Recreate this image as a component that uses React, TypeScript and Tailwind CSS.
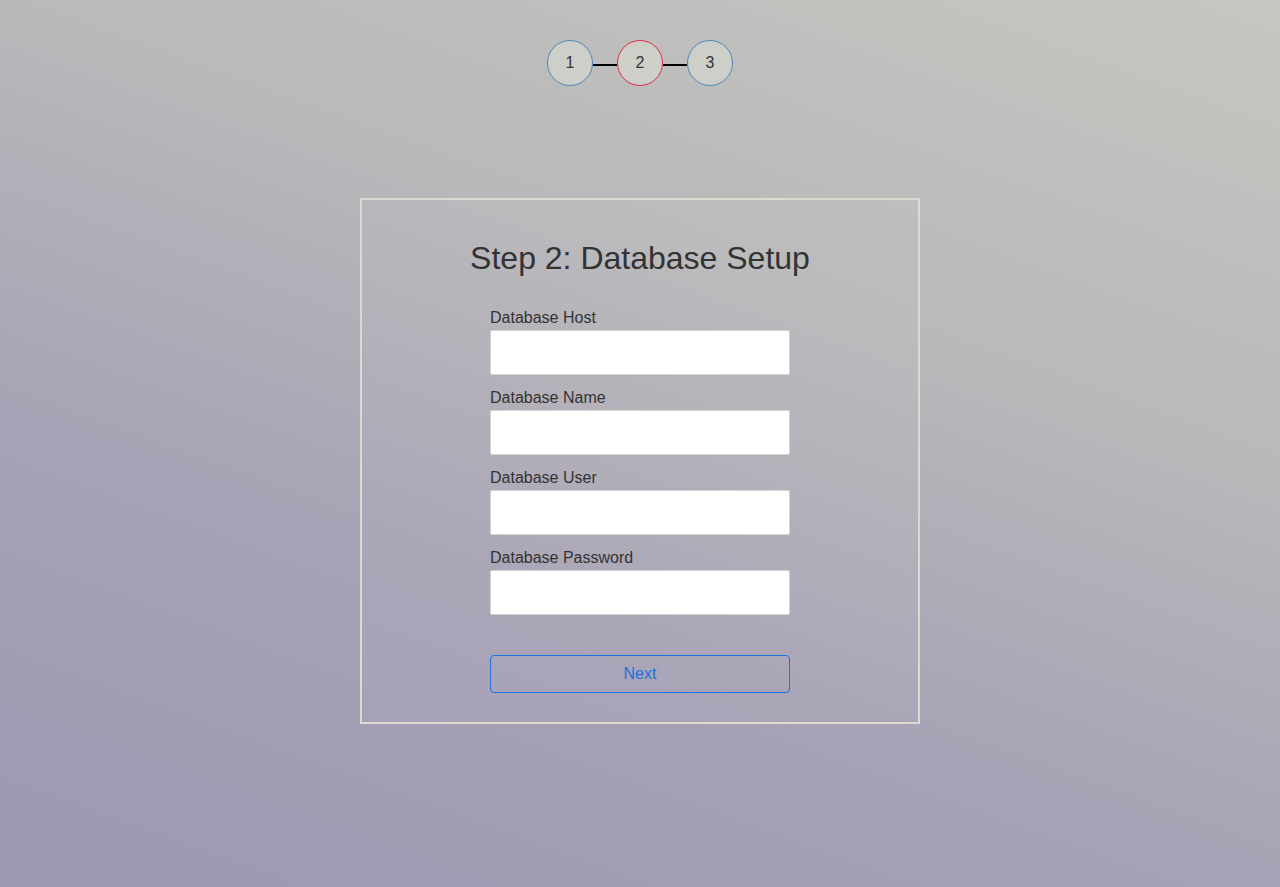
import { useState } from 'react';

const steps = [1, 2, 3];
const fields = [
  { id: 'host', label: 'Database Host', type: 'text' },
  { id: 'name', label: 'Database Name', type: 'text' },
  { id: 'user', label: 'Database User', type: 'text' },
  { id: 'password', label: 'Database Password', type: 'password' },
];

export default function App() {
  const [current] = useState(2);
  const [values, setValues] = useState<Record<string, string>>({});

  return (
    <div
      className="min-h-screen w-full bg-[linear-gradient(200deg,#c6c6c1_0%,#b9b8ba_35%,#a7a2b5_65%,#9d97b1_100%)] pt-[40px] text-[#333] flex flex-col items-center"
      style={{ fontFamily: '"Liberation Sans", Arial, sans-serif' }}
    >
      {/* Step indicator */}
      <div className="flex items-center">
        {steps.map((step, i) => (
          <div key={step} className="flex items-center">
            {i > 0 && <div className="mt-[3px] h-[2px] w-[24px] bg-black" />}
            <div
              className={`flex h-[46px] w-[46px] items-center justify-center rounded-full border bg-[#cfcfca] text-base ${
                step === current ? 'border-[#dc2a4b]' : 'border-[#4f85bb]'
              }`}
            >
              {step}
            </div>
          </div>
        ))}
      </div>

      {/* Card */}
      <div className="mt-[112px] w-[560px] h-[526px] border-2 border-[#dbd9d0] bg-white/[0.04] pt-[39px] flex flex-col items-center">
        <h2 className="text-[32px] leading-[38px] font-normal text-[#333]">Step 2: Database Setup</h2>

        <form className="mt-[31px] w-[300px] flex flex-col gap-[13px]" onSubmit={(e) => e.preventDefault()}>
          {fields.map((field) => (
            <div key={field.id}>
              <label htmlFor={field.id} className="block pt-[1px] text-base leading-[18px] mb-[3px] text-[#333]">
                {field.label}
              </label>
              <input
                id={field.id}
                type={field.type}
                value={values[field.id] || ''}
                onChange={(e) => setValues({ ...values, [field.id]: e.target.value })}
                className="block h-[45px] w-full rounded-[2px] border border-[#d4d4d4] bg-white px-2 focus:outline-none"
              />
            </div>
          ))}

          <button
            type="submit"
            className="mt-[27px] h-[38px] w-full rounded-[4px] border border-[#1a73e0] text-base text-[#1a73e0]"
          >
            Next
          </button>
        </form>
      </div>
    </div>
  );
}
